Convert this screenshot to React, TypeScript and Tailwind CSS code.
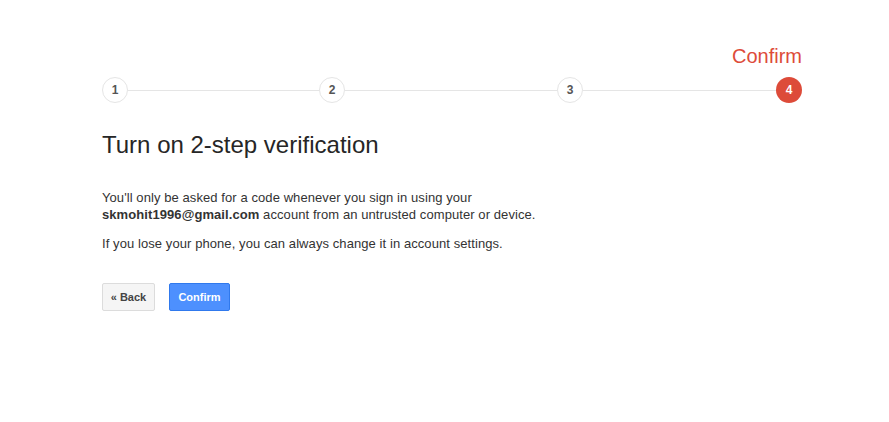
import React from "react";

const Circle = ({ n, active }: { n: number; active?: boolean }) => (
  <div
    className={
      active
        ? "w-[26px] h-[26px] rounded-full bg-[#dd4b39] text-white flex items-center justify-center text-[12px] font-bold shrink-0"
        : "w-[26px] h-[26px] rounded-full border border-[#e5e5e5] bg-white text-[#555] flex items-center justify-center text-[12px] font-bold shrink-0"
    }
  >
    {n}
  </div>
);

export default function App() {
  return (
    <div
      className="min-h-[422px] bg-white text-[#333]"
      style={{ fontFamily: '"Liberation Sans", Arial, sans-serif' }}
    >
      <div className="ml-[102px] w-[700px] pt-[44px]">
        <div className="text-right text-[20px] leading-[24px] text-[#dd4b39]">Confirm</div>
        <div className="mt-[9px] flex items-center">
          <Circle n={1} />
          <div className="h-px bg-[#e5e5e5] w-[191px]" />
          <Circle n={2} />
          <div className="h-px bg-[#e5e5e5] w-[212px]" />
          <Circle n={3} />
          <div className="h-px bg-[#e5e5e5] flex-1" />
          <Circle n={4} active />
        </div>
        <h1 className="mt-[28px] text-[24px] leading-[28px] font-normal text-[#262626]">
          Turn on 2-step verification
        </h1>
        <p className="mt-[30px] text-[13px] leading-[17px] tracking-[0.08px]">
          You'll only be asked for a code whenever you sign in using your
          <br />
          <b>skmohit1996@gmail.com</b> account from an untrusted computer or device.
        </p>
        <p className="mt-[12px] text-[13px] leading-[17px] tracking-[0.08px]">
          If you lose your phone, you can always change it in account settings.
        </p>
        <div className="mt-[31px] flex gap-[14px]">
          <button className="h-[28px] w-[53px] rounded-[2px] border border-[#dcdcdc] bg-[#f5f5f5] text-[11px] font-bold text-[#444]">
            « Back
          </button>
          <button className="h-[28px] w-[61px] rounded-[2px] border border-[#3079ed] bg-[#4d90fe] text-[11px] font-bold text-white">
            Confirm
          </button>
        </div>
      </div>
    </div>
  );
}
